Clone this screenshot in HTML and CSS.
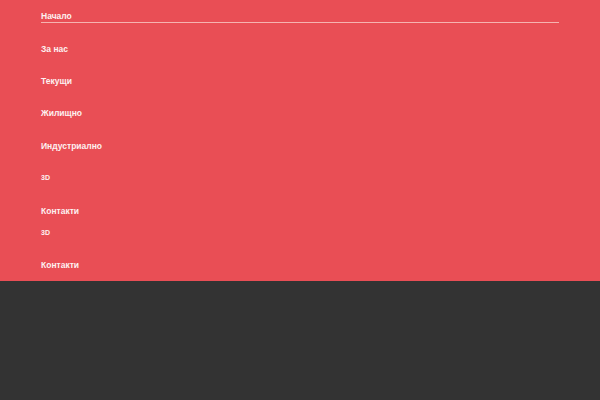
FILE: index.html
```html
<!DOCTYPE html>
<html lang="bg">
<head>
<meta charset="utf-8">
<link rel="stylesheet" href="styles.css">
</head>
<body>
<header class="menu">
  <ul class="nav">
    <li class="item active"><a href="#">Начало</a></li>
    <li class="item"><a href="#">За нас</a></li>
    <li class="item"><a href="#">Текущи</a></li>
    <li class="item"><a href="#">Жилищно</a></li>
    <li class="item"><a href="#">Индустриално</a></li>
    <li class="item small"><a href="#">3D</a></li>
    <li class="item"><a href="#">Контакти</a></li>
    <li class="item small tight"><a href="#">3D</a></li>
    <li class="item"><a href="#">Контакти</a></li>
  </ul>
</header>
</body>
</html>
```
FILE: styles.css
```css
html, body {
  margin: 0;
  padding: 0;
  height: 100%;
}
body {
  background: #333333;
  font-family: "Liberation Sans", Arial, sans-serif;
}
.menu {
  background: #e94e55;
  padding: 0 41px;
}
.nav {
  list-style: none;
  margin: 0;
  padding: 0;
}
.item {
  height: 32.4px;
  display: flex;
  align-items: center;
}
.item a {
  color: #fdf1f1;
  text-decoration: none;
  font-weight: bold;
  font-size: 8.5px;
  line-height: 10px;
}
.item.active {
  flex-direction: column;
  align-items: stretch;
}
.item.active a {
  display: block;
  padding-top: 10.5px;
  padding-bottom: 1.5px;
  border-bottom: 1.5px solid #f6b3b0;
}
.item.small a {
  font-size: 7px;
}
.item.tight {
  height: 22px;
  align-items: flex-start;
}
.item.tight a {
  line-height: 11px;
}
```
